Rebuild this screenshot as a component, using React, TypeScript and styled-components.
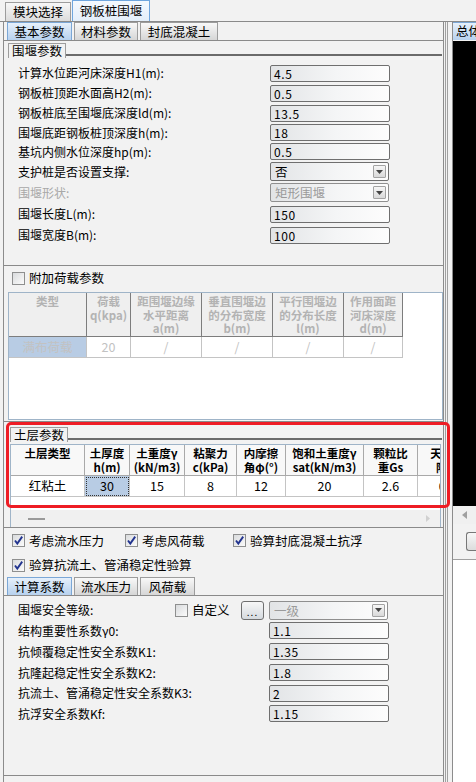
import React from "react";
import styled, { createGlobalStyle } from "styled-components";

const GlobalStyle = createGlobalStyle`
  html, body {
    margin: 0;
    padding: 0;
    background: #f2f2f2;
  }
  body {
    font-family: "Noto Sans CJK SC", "Noto Sans", sans-serif;
    font-size: 12px;
    color: #000;
  }
  * {
    box-sizing: border-box;
  }
`;

const Window = styled.div`
  width: 476px;
  height: 782px;
  overflow: hidden;
  display: flex;
  flex-direction: column;
  background: #f2f2f2;
`;

/* ---------- tabs ---------- */

const TopBar = styled.div`
  height: 22px;
  flex-shrink: 0;
  display: flex;
  align-items: flex-end;
  gap: 1px;
  padding-left: 5px;
  border-bottom: 1px solid #8a8a8a;
`;

const TopTab = styled.div<{ $w: number; $active?: boolean }>`
  width: ${(p) => p.$w}px;
  height: ${(p) => (p.$active ? 21 : 19)}px;
  display: flex;
  align-items: center;
  justify-content: center;
  font-size: 12.5px;
  line-height: 14px;
  border: 1px solid ${(p) => (p.$active ? "#6fa6de" : "#9c9c9c")};
  border-bottom: none;
  background: ${(p) =>
    p.$active
      ? "linear-gradient(#f4f9fe, #e3eefa)"
      : "linear-gradient(#f7f7f7, #dcdcdc)"};
`;

const TabBar = styled.div`
  height: 19px;
  flex-shrink: 0;
  display: flex;
  align-items: flex-end;
  gap: 2px;
  padding-left: 3px;
  border-bottom: 1px solid #8a8a8a;
`;

const Tab = styled.div<{ $w: number; $active?: boolean }>`
  width: ${(p) => p.$w}px;
  height: 18px;
  display: flex;
  align-items: center;
  justify-content: center;
  font-size: 12.5px;
  line-height: 14px;
  border: 1px solid ${(p) => (p.$active ? "#7ba7d6" : "#9c9c9c")};
  border-bottom: none;
  background: ${(p) =>
    p.$active
      ? "linear-gradient(#e6f0fb, #b7d1ee)"
      : "linear-gradient(#f8f8f8, #d6d6d6)"};
`;

/* ---------- layout ---------- */

const Body = styled.div`
  flex: 1;
  display: flex;
  position: relative;
`;

const LeftCol = styled.div`
  width: 441px;
  margin-left: 3px;
  border-left: 1px solid #8c8c8c;
  border-right: 1px solid #8c8c8c;
  display: flex;
  flex-direction: column;
`;

const Splitter = styled.div`
  width: 8px;
  background: linear-gradient(
    to right,
    transparent 1px,
    #a0a0a0 1px,
    #a0a0a0 2px,
    transparent 2px,
    transparent 3px,
    #a0a0a0 3px,
    #a0a0a0 4px,
    transparent 4px
  );
`;

const Panel = styled.div<{ $h: number }>`
  height: ${(p) => p.$h}px;
  flex-shrink: 0;
  border-bottom: 1px solid #8a8a8a;
  overflow: hidden;
`;

const GroupHead = styled.div<{ $top: number; $left: number }>`
  display: flex;
  align-items: flex-end;
  margin: ${(p) => p.$top}px 1px 0 ${(p) => p.$left}px;
  height: 15px;
`;

const Legend = styled.div`
  height: 15px;
  padding: 0 3px;
  border: 1px solid #9d9d9d;
  border-bottom: none;
  font-size: 12.5px;
  line-height: 14px;
`;

const GroupLine = styled.div`
  flex: 1;
  height: 2px;
  margin-bottom: 2px;
  background: #6b6b6b;
`;

/* ---------- form ---------- */

const Rows = styled.div<{ $top: number }>`
  margin-top: ${(p) => p.$top}px;
  padding-left: 14px;
`;

const Row = styled.div<{ $h: number }>`
  height: ${(p) => p.$h}px;
  display: flex;
  align-items: center;
`;

const Label = styled.div<{ $w: number; $dim?: boolean }>`
  width: ${(p) => p.$w}px;
  flex-shrink: 0;
  line-height: 14px;
  white-space: nowrap;
  color: ${(p) => (p.$dim ? "#a8a8a8" : "#000")};
`;

const TextBox = styled.div`
  width: 120px;
  height: 17px;
  padding-left: 3px;
  border: 1px solid #6f6f6f;
  border-radius: 2px;
  background: linear-gradient(to right, #e2e4e6, #f4f5f6 55%, #fdfdfd);
  line-height: 15px;
  letter-spacing: 0.6px;
`;

const SelectBox = styled.div<{ $dim?: boolean }>`
  width: 119px;
  height: 19px;
  padding: 0 2px 0 4px;
  display: flex;
  align-items: center;
  justify-content: space-between;
  border: 1px solid ${(p) => (p.$dim ? "#8f8f8f" : "#6f6f6f")};
  border-radius: 2px;
  background: linear-gradient(to right, #e2e4e6, #f4f5f6 55%, #fdfdfd);
  color: ${(p) => (p.$dim ? "#9a9a9a" : "#000")};
  font-size: 12.5px;
  line-height: 15px;
`;

const ArrowBtn = styled.span`
  width: 13px;
  height: 13px;
  display: flex;
  align-items: center;
  justify-content: center;
  border: 1px solid #a3a3a3;
  border-radius: 1px;
  background: linear-gradient(#f6f6f6, #d9d9d9);
`;

const DotsBtn = styled.div`
  width: 23px;
  height: 19px;
  margin-right: 5px;
  display: flex;
  align-items: flex-end;
  justify-content: center;
  padding-bottom: 2px;
  border: 1px solid #6f6f6f;
  border-radius: 3px;
  background: linear-gradient(#f7f7f7, #d5dadf);
  font-size: 10px;
  line-height: 10px;
  letter-spacing: 1px;
`;

/* ---------- checkbox ---------- */

const Box = styled.span`
  width: 13px;
  height: 13px;
  flex-shrink: 0;
  display: inline-flex;
  align-items: center;
  justify-content: center;
  border: 1px solid #8e8f8f;
  background: linear-gradient(135deg, #d9dbdd, #fbfbfb);
`;

const CheckItem = styled.div<{ $w?: number }>`
  width: ${(p) => (p.$w ? `${p.$w}px` : "auto")};
  flex-shrink: 0;
  display: flex;
  align-items: center;
  gap: 4px;
  font-size: 12.5px;
  line-height: 14px;
  white-space: nowrap;
`;

const CheckRow = styled.div<{ $h: number }>`
  height: ${(p) => p.$h}px;
  display: flex;
  align-items: center;
  padding-left: 8px;
`;

const Check = ({ on }: { on?: boolean }) => (
  <Box>
    {on && (
      <svg width="11" height="11" viewBox="0 0 11 11">
        <path d="M2 5.5 L4.3 8.6 L9.2 1.6" fill="none" stroke="#22348f" strokeWidth="1.9" />
      </svg>
    )}
  </Box>
);

const Arrow = () => (
  <ArrowBtn>
    <svg width="7" height="4" viewBox="0 0 7 4">
      <polygon points="0,0 7,0 3.5,4" fill="#444" />
    </svg>
  </ArrowBtn>
);

/* ---------- tables ---------- */

const TableBox = styled.div<{ $left: number; $w: number; $h: number; $top: number }>`
  margin: ${(p) => p.$top}px 0 0 ${(p) => p.$left}px;
  width: ${(p) => p.$w}px;
  height: ${(p) => p.$h}px;
  border: 1px solid #9fb4c8;
  background: #fff;
  overflow: hidden;
  display: flex;
  flex-direction: column;
`;

const TRow = styled.div`
  display: flex;
  flex-shrink: 0;
`;

const HeadCell = styled.div<{ $w: number; $h: number; $dim?: boolean; $pad: number; $lh: number }>`
  width: ${(p) => p.$w}px;
  height: ${(p) => p.$h}px;
  flex-shrink: 0;
  padding-top: ${(p) => p.$pad}px;
  text-align: center;
  font-weight: 700;
  font-size: 11.5px;
  line-height: ${(p) => p.$lh}px;
  white-space: nowrap;
  overflow: hidden;
  color: ${(p) => (p.$dim ? "#b3b3b3" : "#000")};
  background: ${(p) => (p.$dim ? "#efefef" : "#f8f8f8")};
  border-right: 1px solid ${(p) => (p.$dim ? "#7d7d7d" : "#a9a9a9")};
  border-bottom: 1px solid ${(p) => (p.$dim ? "#7d7d7d" : "#a9a9a9")};
`;

const Cell = styled.div<{ $w: number; $dim?: boolean; $sel?: boolean; $focus?: boolean }>`
  width: ${(p) => p.$w}px;
  height: 21px;
  flex-shrink: 0;
  display: flex;
  align-items: center;
  justify-content: center;
  font-size: 12.5px;
  line-height: 14px;
  white-space: nowrap;
  overflow: hidden;
  color: ${(p) => (p.$dim ? "#c2c2c2" : "#000")};
  background: ${(p) => (p.$sel ? "#b8cce4" : "#fff")};
  border-right: 1px solid #c4c4c4;
  border-bottom: 1px solid #c4c4c4;
  outline: ${(p) => (p.$focus ? "1px dotted #333" : "none")};
  outline-offset: -2px;
`;

const Filler = styled.div`
  flex: 1;
  background: #fff;
`;

const HScroll = styled.div`
  height: 17px;
  flex-shrink: 0;
  display: flex;
  align-items: center;
  justify-content: space-between;
  padding: 0 10px 0 17px;
  background: #f0f0f0;
`;

const Thumb = styled.span`
  width: 17px;
  height: 2px;
  background: #9a9a9a;
`;

const Highlight = styled.div`
  position: absolute;
  left: 6px;
  top: 400px;
  width: 444px;
  height: 86px;
  border: 3px solid #ee1c24;
  border-radius: 5px;
  pointer-events: none;
`;

/* ---------- right pane ---------- */

const RightCol = styled.div`
  flex: 1;
  border-left: 1px solid #8c8c8c;
  display: flex;
  flex-direction: column;
  overflow: hidden;
`;

const RightTab = styled.div`
  height: 18px;
  flex-shrink: 0;
  padding-left: 3px;
  border-top: 1px solid #7ba7d6;
  background: linear-gradient(#e6f0fb, #b7d1ee);
  font-size: 12.5px;
  line-height: 16px;
  white-space: nowrap;
  overflow: hidden;
`;

const Viewport = styled.div`
  height: 465px;
  flex-shrink: 0;
  background: #000;
  margin-top: 1px;
`;

const RScroll = styled.div`
  height: 18px;
  flex-shrink: 0;
  display: flex;
  align-items: center;
  padding-left: 9px;
  background: #f0f0f0;
`;

const RButton = styled.div`
  height: 19px;
  margin: 8px 0 0 13px;
  flex-shrink: 0;
  border: 1px solid #777;
  border-right: none;
  border-radius: 3px 0 0 3px;
  background: linear-gradient(#f7f7f7, #dcdcdc);
`;

const RWhite = styled.div`
  flex: 1;
  margin-top: 8px;
  background: #fff;
  border-top: 1px solid #a0a0a0;
`;

/* ---------- data ---------- */

type Field = { label: string; h: number; value?: string; select?: string; dim?: boolean };

const damFields: Field[] = [
  { label: "计算水位距河床深度H1(m):", value: "4.5", h: 20 },
  { label: "钢板桩顶距水面高H2(m):", value: "0.5", h: 20 },
  { label: "钢板桩底至围堰底深度ld(m):", value: "13.5", h: 20 },
  { label: "围堰底距钢板桩顶深度h(m):", value: "18", h: 19 },
  { label: "基坑内侧水位深度hp(m):", value: "0.5", h: 19 },
  { label: "支护桩是否设置支撑:", select: "否", h: 21 },
  { label: "围堰形状:", select: "矩形围堰", dim: true, h: 21 },
  { label: "围堰长度L(m):", value: "150", h: 22 },
  { label: "围堰宽度B(m):", value: "100", h: 20 },
];

const safetyFields: Field[] = [
  { label: "结构重要性系数γ0:", value: "1.1", h: 21 },
  { label: "抗倾覆稳定性安全系数K1:", value: "1.35", h: 21 },
  { label: "抗隆起稳定性安全系数K2:", value: "1.8", h: 21 },
  { label: "抗流土、管涌稳定性安全系数K3:", value: "2", h: 20 },
  { label: "抗浮安全系数Kf:", value: "1.15", h: 21 },
];

const loadCols = [
  { w: 78, head: ["类型"], cell: "满布荷载" },
  { w: 44, head: ["荷载", "q(kpa)"], cell: "20" },
  { w: 71, head: ["距围堰边缘", "水平距离", "a(m)"], cell: "/" },
  { w: 71, head: ["垂直围堰边", "的分布宽度", "b(m)"], cell: "/" },
  { w: 71, head: ["平行围堰边", "的分布长度", "l(m)"], cell: "/" },
  { w: 59, head: ["作用面距", "河床深度", "d(m)"], cell: "/" },
];

const soilCols = [
  { w: 74, head: ["土层类型"], cell: "红粘土" },
  { w: 45, head: ["土厚度", "h(m)"], cell: "30" },
  { w: 55, head: ["土重度γ", "(kN/m3)"], cell: "15" },
  { w: 52, head: ["粘聚力", "c(kPa)"], cell: "8" },
  { w: 49, head: ["内摩擦", "角φ(°)"], cell: "12" },
  { w: 78, head: ["饱和土重度γ", "sat(kN/m3)"], cell: "20" },
  { w: 54, head: ["颗粒比", "重Gs"], cell: "2.6" },
  { w: 60, head: ["天然孔", "隙比"], cell: "0.8" },
];

const FieldRow = ({ f, lw }: { f: Field; lw: number }) => (
  <Row $h={f.h}>
    <Label $w={lw} $dim={f.dim}>
      {f.label}
    </Label>
    {f.select !== undefined ? (
      <SelectBox $dim={f.dim}>
        <span>{f.select}</span>
        <Arrow />
      </SelectBox>
    ) : (
      <TextBox>{f.value}</TextBox>
    )}
  </Row>
);

const App: React.FC = () => {
  return (
    <Window>
      <GlobalStyle />
      <TopBar>
        <TopTab $w={66}>模块选择</TopTab>
        <TopTab $w={78} $active>
          钢板桩围堰
        </TopTab>
      </TopBar>

      <Body>
        <LeftCol>
          <TabBar>
            <Tab $w={65} $active>
              基本参数
            </Tab>
            <Tab $w={64}>材料参数</Tab>
            <Tab $w={78}>封底混凝土</Tab>
          </TabBar>

          <Panel $h={225}>
            <GroupHead $top={2} $left={4}>
              <Legend>围堰参数</Legend>
              <GroupLine />
            </GroupHead>
            <Rows $top={5}>
              {damFields.map((f) => (
                <FieldRow key={f.label} f={f} lw={252} />
              ))}
            </Rows>
          </Panel>

          <Panel $h={156}>
            <CheckRow $h={24}>
              <CheckItem>
                <Check />
                附加荷载参数
              </CheckItem>
            </CheckRow>
            <TableBox $left={4} $w={435} $h={128} $top={2}>
              <TRow>
                {loadCols.map((c) => (
                  <HeadCell key={c.head.join()} $w={c.w} $h={44} $dim $pad={2} $lh={13.5}>
                    {c.head.map((l) => (
                      <div key={l}>{l}</div>
                    ))}
                  </HeadCell>
                ))}
              </TRow>
              <TRow>
                {loadCols.map((c, i) => (
                  <Cell key={i} $w={c.w} $dim $sel={i === 0}>
                    {c.cell}
                  </Cell>
                ))}
              </TRow>
              <Filler />
            </TableBox>
          </Panel>

          <Panel $h={106}>
            <GroupHead $top={5} $left={6}>
              <Legend>土层参数</Legend>
              <GroupLine />
            </GroupHead>
            <TableBox $left={6} $w={431} $h={84} $top={2}>
              <TRow>
                {soilCols.map((c) => (
                  <HeadCell key={c.head.join()} $w={c.w} $h={31} $pad={2} $lh={13.5}>
                    {c.head.map((l) => (
                      <div key={l}>{l}</div>
                    ))}
                  </HeadCell>
                ))}
              </TRow>
              <TRow>
                {soilCols.map((c, i) => (
                  <Cell key={i} $w={c.w} $sel={i === 1} $focus={i === 1}>
                    {c.cell}
                  </Cell>
                ))}
              </TRow>
              <Filler />
              <HScroll>
                <Thumb />
                <svg width="4" height="7" viewBox="0 0 4 7">
                  <polygon points="0,0 4,3.5 0,7" fill="#d0d0d0" />
                </svg>
              </HScroll>
            </TableBox>
          </Panel>

          <CheckRow $h={25}>
            <CheckItem $w={113}>
              <Check on />
              考虑流水压力
            </CheckItem>
            <CheckItem $w={108}>
              <Check on />
              考虑风荷载
            </CheckItem>
            <CheckItem>
              <Check on />
              验算封底混凝土抗浮
            </CheckItem>
          </CheckRow>
          <CheckRow $h={24}>
            <CheckItem>
              <Check on />
              验算抗流土、管涌稳定性验算
            </CheckItem>
          </CheckRow>

          <TabBar>
            <Tab $w={65} $active>
              计算系数
            </Tab>
            <Tab $w={64}>流水压力</Tab>
            <Tab $w={55}>风荷载</Tab>
          </TabBar>

          <Panel $h={180}>
            <Rows $top={4}>
              <Row $h={20}>
                <Label $w={157}>围堰安全等级:</Label>
                <CheckItem $w={66}>
                  <Check />
                  自定义
                </CheckItem>
                <DotsBtn>...</DotsBtn>
                <SelectBox $dim>
                  <span>一级</span>
                  <Arrow />
                </SelectBox>
              </Row>
              {safetyFields.map((f) => (
                <FieldRow key={f.label} f={f} lw={251} />
              ))}
            </Rows>
          </Panel>
        </LeftCol>

        <Splitter />

        <RightCol>
          <RightTab>总体</RightTab>
          <Viewport />
          <RScroll>
            <svg width="5" height="8" viewBox="0 0 5 8">
              <polygon points="5,0 0,4 5,8" fill="#a0a0a0" />
            </svg>
          </RScroll>
          <RButton />
          <RWhite />
        </RightCol>

        <Highlight />
      </Body>
    </Window>
  );
};

export default App;
